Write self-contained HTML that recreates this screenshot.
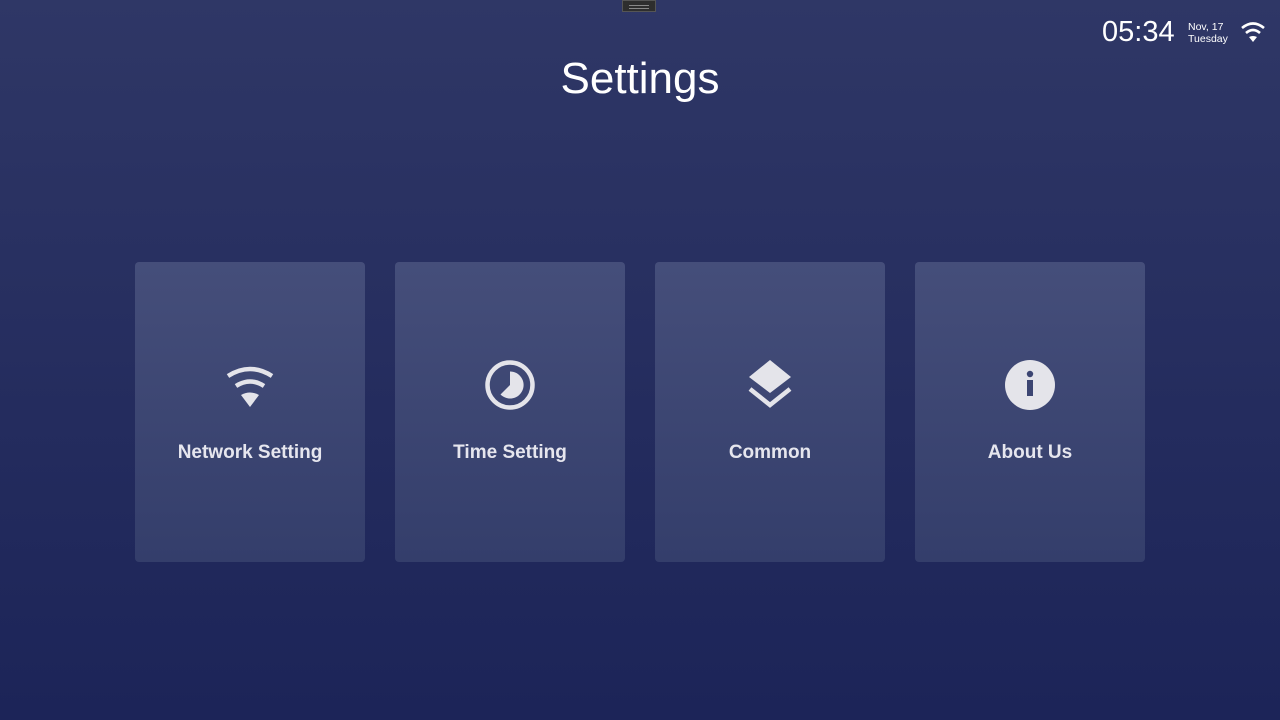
<!DOCTYPE html>
<html><head><style>
html,body{margin:0;padding:0;}
body{width:1280px;height:720px;overflow:hidden;background:linear-gradient(#2f3766,#1c2458);font-family:"Liberation Sans",sans-serif;color:#fff;position:relative;}
.notch{position:absolute;left:622px;top:0;width:34px;height:12px;background:#2e2e2e;border:1px solid #555;box-sizing:border-box;}
.notch:after{content:"";position:absolute;left:6px;right:6px;top:4px;height:2px;border-top:1px solid #888;border-bottom:1px solid #888;}
h1{position:absolute;top:54px;left:0;width:1280px;text-align:center;margin:0;font-weight:normal;font-size:44px;line-height:50px;}
.time{position:absolute;left:1102px;top:16px;font-size:29px;}
.date{position:absolute;left:1188px;top:21px;font-size:10.5px;line-height:12px;}
.card{position:absolute;top:262px;width:230px;height:300px;border-radius:4px;background:linear-gradient(#454e7a,#343e6b);}
.card svg{position:absolute;left:90px;top:98px;}
.card .lbl{position:absolute;top:180px;width:100%;text-align:center;font-weight:bold;font-size:19px;color:#e6e6ee;}
</style></head><body>
<div class="notch"></div>
<h1>Settings</h1>
<div class="time">05:34</div>
<div class="date">Nov, 17<br>Tuesday</div>
<svg style="position:absolute;left:1240px;top:20px" width="26" height="24" viewBox="0 0 26 24"><g fill="none" stroke="#fff" stroke-width="2.6"><path d="M2 8 Q13 -1 24 8"/><path d="M6 13 Q13 7 20 13"/></g><path d="M9 17 Q13 15 17 17 L13 22 Z" fill="#fff"/></svg>

<div class="card" style="left:135px"><svg width="50" height="50" viewBox="0 0 50 50"><g fill="none" stroke="#e4e4ea" stroke-width="4.5"><path d="M3 16 Q25 2 47 16"/><path d="M11 26 Q25 17 39 26"/></g><path d="M16 35 Q25 30 34 35 L25 47 Z" fill="#e4e4ea"/></svg><div class="lbl">Network Setting</div></div>
<div class="card" style="left:395px"><svg width="50" height="50" viewBox="0 0 50 50"><circle cx="25" cy="25" r="22.5" fill="none" stroke="#e4e4ea" stroke-width="4.5"/><path d="M25 25 L25 11.5 A13.5 13.5 0 1 1 15.5 34.5 Z" fill="#e4e4ea"/></svg><div class="lbl">Time Setting</div></div>
<div class="card" style="left:655px"><svg width="50" height="50" viewBox="0 0 50 50"><path d="M25 0 L46 17 L25 33 L4 17 Z" fill="#e4e4ea"/><path d="M5 29 L25 45 L45 29" fill="none" stroke="#e4e4ea" stroke-width="4.5"/></svg><div class="lbl">Common</div></div>
<div class="card" style="left:915px"><svg width="50" height="50" viewBox="0 0 50 50"><circle cx="25" cy="25" r="25" fill="#e4e4ea"/><circle cx="25" cy="14" r="3.2" fill="#3c4572"/><rect x="22" y="20" width="6" height="16" fill="#3c4572"/></svg><div class="lbl">About Us</div></div>
</body></html>
